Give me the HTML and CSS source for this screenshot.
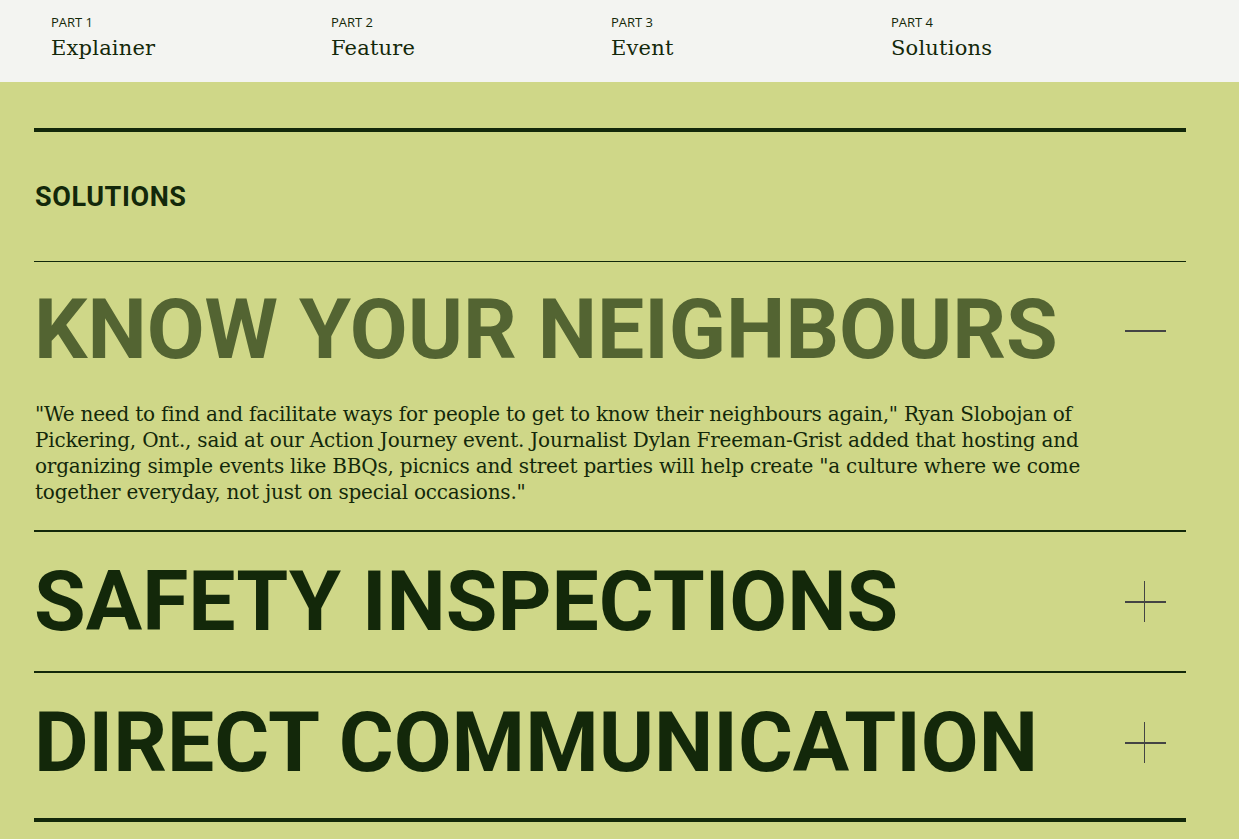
FILE: index.html
```html
<!DOCTYPE html>
<html lang="en">
<head>
<meta charset="utf-8">
<title>Solutions</title>
<link rel="stylesheet" href="styles.css">
</head>
<body>
<nav class="parts">
  <a class="part" href="#"><span class="part-num">PART 1</span><span class="part-name">Explainer</span></a>
  <a class="part" href="#"><span class="part-num">PART 2</span><span class="part-name">Feature</span></a>
  <a class="part" href="#"><span class="part-num">PART 3</span><span class="part-name">Event</span></a>
  <a class="part" href="#"><span class="part-num">PART 4</span><span class="part-name">Solutions</span></a>
</nav>
<main class="page">
  <section class="solutions">
    <h2 class="section-label">SOLUTIONS</h2>
    <div class="accordion">
      <div class="item open">
        <div class="item-head">
          <h3 class="item-title">KNOW YOUR NEIGHBOURS</h3>
          <span class="toggle minus"></span>
        </div>
        <p class="item-body">"We need to find and facilitate ways for people to get to know their neighbours again," Ryan Slobojan of Pickering, Ont., said at our Action Journey event. Journalist Dylan Freeman-Grist added that hosting and organizing simple events like BBQs, picnics and street parties will help create "a culture where we come together everyday, not just on special occasions."</p>
      </div>
      <div class="item">
        <div class="item-head">
          <h3 class="item-title">SAFETY INSPECTIONS</h3>
          <span class="toggle plus"></span>
        </div>
      </div>
      <div class="item">
        <div class="item-head">
          <h3 class="item-title">DIRECT COMMUNICATION</h3>
          <span class="toggle plus"></span>
        </div>
      </div>
    </div>
  </section>
</main>
</body>
</html>
```
FILE: styles.css
```css
html, body {
  margin: 0;
  padding: 0;
}
body {
  background: #cfd788;
  color: #13280a;
  min-height: 839px;
}
.parts {
  display: flex;
  height: 82px;
  box-sizing: border-box;
  padding: 13px 0 0 51px;
  background: #f3f4f1;
}
.part {
  display: flex;
  flex-direction: column;
  width: 280px;
  text-decoration: none;
  color: #13280a;
}
.part-num {
  font-family: "Open Sans", sans-serif;
  font-size: 13px;
  line-height: 18px;
}
.part-name {
  font-family: "DejaVu Serif", serif;
  font-size: 21px;
  letter-spacing: 0.2px;
  line-height: 34px;
}
.page {
  padding: 46px 53px 0 34px;
}
.solutions {
  border-top: 4px solid #13280a;
}
.section-label {
  margin: 0;
  font-family: "Roboto", sans-serif;
  font-weight: 700;
  font-size: 27px;
  letter-spacing: 0.6px;
  line-height: 30px;
  padding: 50px 0 49px 1px;
  border-bottom: 1px solid #13280a;
}
.accordion {
  padding-bottom: 6px;
  border-bottom: 4px solid #13280a;
}
.item + .item {
  border-top: 2px solid #13280a;
}
.item-head {
  display: flex;
  align-items: center;
  justify-content: space-between;
  height: 139px;
}
.item-title {
  margin: 0;
  font-family: "Roboto", sans-serif;
  font-weight: 700;
  font-size: 84px;
  letter-spacing: 0;
  line-height: 1;
  white-space: nowrap;
}
.item.open .item-title {
  color: #536432;
}
.item.open .item-head {
  height: 136px;
}
.toggle {
  position: relative;
  flex: none;
  width: 41px;
  height: 41px;
  margin-right: 20px;
}
.toggle::before {
  content: "";
  position: absolute;
  left: 0;
  right: 0;
  top: 20px;
  height: 2px;
  background: #444;
}
.plus::after {
  content: "";
  position: absolute;
  top: 0;
  bottom: 0;
  left: 19px;
  width: 1px;
  background: #444;
}
.item-body {
  margin: 0;
  max-width: 1080px;
  padding: 3px 0 25px 1px;
  font-family: "DejaVu Serif", serif;
  font-size: 20px;
  line-height: 26px;
  letter-spacing: -0.2px;
}
```
